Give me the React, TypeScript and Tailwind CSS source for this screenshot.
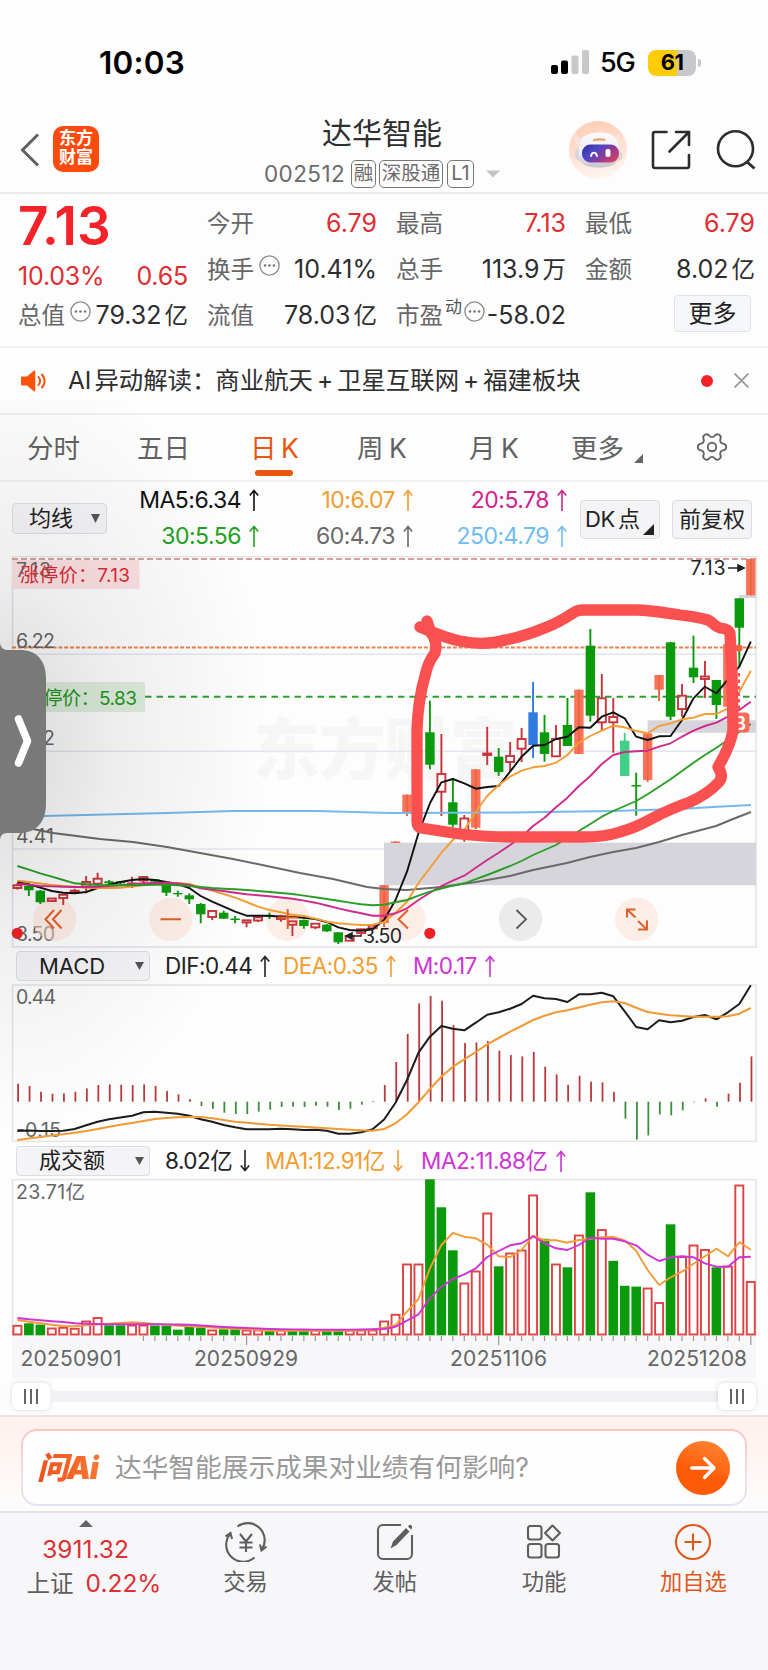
import type { ReactNode } from 'react';
import { Settings } from 'lucide-react';

type Candle = [kind: string, high: number, top: number, bottom: number, low: number];

const STEP = 11.459;
const xAt = (i: number) => 17.4 + i * STEP;

const COLORS: Record<string, string> = {
  r: '#c9343a',
  g: '#0b9a0b',
  o: '#f87459',
  b: '#2f7be0',
  m: '#42d089',
};

// kind: r = hollow red, g = green, o = limit up, b = blue, m = mint
const candles: (Candle | null)[] = [
  ['r', 883, 885.3, 888, 889.5], ['g', 885, 885.7, 890.3, 896], ['g', 890, 890.7, 902.3, 904],
  ['r', 898, 898.5, 901, 901], ['r', 894, 894.8, 898, 905], ['r', 888.7, 890.7, 892, 893.3],
  ['r', 876, 882, 886.5, 893.3], ['r', 872.7, 878.7, 883.7, 888.3], ['g', 880, 881.3, 883.3, 884.7],
  ['g', 881, 881.3, 883.3, 884.7], ['r', 876.7, 883.5, 885, 888], ['r', 876.5, 877, 880.5, 883.3],
  ['g', 879, 879.3, 881.7, 882], ['g', 885, 885, 892.7, 896], ['g', 890.7, 893, 894.3, 896.7],
  ['g', 893.3, 895.3, 899.3, 904], ['g', 903, 904, 914.3, 923.3], ['r', 910.5, 911, 917, 920],
  ['g', 910.7, 912.7, 918.7, 919], ['g', 916, 918.5, 920, 923.3], ['r', 920, 920.3, 922.5, 927.3],
  ['r', 917, 917.3, 920.5, 922], ['g', 912.7, 915.3, 917, 919], ['r', 915, 916.3, 919, 921.7],
  ['r', 921, 921.3, 924.7, 936], ['g', 919.5, 920, 926, 928.7], ['r', 923, 923.7, 927.3, 929.3],
  ['g', 924, 924.7, 931.3, 932], ['g', 932, 932.3, 942.3, 944], ['r', 935.5, 936, 940.7, 941],
  ['r', 928.5, 929.3, 933, 936.7], ['r', 925, 925.7, 928.3, 929], ['o', 885, 885, 923, 927],
  ['o', 841.5, 841.5, 843, 843], ['o', 794.7, 794.7, 812.3, 816], null,
  ['g', 700.7, 732.3, 764.7, 769.3], ['r', 734, 774, 791.7, 816], ['g', 778, 802.3, 824.7, 827],
  ['r', 815, 818.5, 831, 841.7], ['o', 769.3, 769.3, 827.7, 829], ['r', 726.7, 753.5, 755, 765],
  ['g', 748, 756.7, 772, 776], ['r', 742, 756, 762, 772], ['r', 728, 739, 748.7, 762],
  ['b', 682, 712.3, 745, 758], ['g', 715, 732.3, 754, 761.7], ['r', 725, 739, 756.3, 757],
  ['g', 698, 725, 746, 746], ['o', 689.7, 689.7, 754, 754], ['g', 629, 645.7, 715.7, 721.7],
  ['r', 674, 698.3, 722.3, 731], ['r', 698, 717, 722.3, 752.7], ['m', 733, 740.7, 776, 776],
  ['g', 772.7, 785, 786.5, 815.7], ['o', 733.3, 733.3, 780, 782], ['o', 675, 675, 689.7, 701],
  ['g', 642, 642.3, 716.7, 720], ['r', 684, 695.7, 709, 716.7], ['g', 635.7, 667.7, 677.3, 683],
  ['r', 661, 676.5, 679, 698], ['g', 680, 680, 705, 719], ['o', 644, 644, 706.7, 706.7],
  ['g', 598.3, 598.3, 627.7, 666.7], ['o', 559, 559, 595.3, 595.3],
];

const ma5 = [
  882, 884.3, 887.7, 891, 892.7, 893.3, 892, 888, 884.7, 882, 880, 879, 880, 882, 884, 888, 896, 901.7, 906.7, 911.7,
  915.7, 915.7, 915.7, 916.7, 916.7, 917.7, 919, 922, 927.3, 930, 930.7, 929.3, 920, 900, 871.7, 833, 803.3, 782.3,
  779, 783.3, 788.7, 787, 786, 771.7, 756.7, 745.7, 745, 739, 736.7, 727.3, 727.7, 716.7, 712.3, 718.3, 736.7, 740,
  736.3, 736, 720, 698.3, 686.7, 693.3, 679.3, 666.7, 641.7,
];

const ma10 = [
  880.7, 882, 883.5, 885, 886, 886.7, 887.7, 888, 888, 887.7, 886.5, 885.3, 884, 882.7, 883, 884, 887.3, 890.5, 894,
  897.7, 902, 906.7, 910, 912.3, 914.7, 916, 918.7, 921.7, 923.3, 924.3, 925, 924.7, 922, 912.7, 901.7, 883, 868,
  852.7, 840, 830, 811.7, 796, 785, 776.7, 770.7, 767.3, 766, 762.7, 755, 742.7, 736, 730.7, 725.7, 727.3, 731, 733.3,
  726, 723.3, 719.3, 717.7, 714, 714, 708.3, 691.7, 670.7,
];

const ma20 = [
  883.7, 884.8, 886, 886.4, 886.7, 887, 887, 886.7, 886, 885.3, 884.3, 883.3, 883, 882.7, 883.5, 885, 888.3, 889.7,
  891, 892.7, 894.3, 895.3, 896.3, 897.5, 898.7, 900.6, 902.7, 905.5, 908.3, 911, 913.3, 915.7, 915.7, 913.3, 908.3,
  900, 892.7, 886, 880.7, 875.7, 867.7, 860, 852.7, 845, 836.7, 826, 817.7, 807.3, 797.7, 786, 776, 764, 755, 752,
  751.3, 750.7, 746.7, 743.3, 736.7, 730.7, 726, 722.7, 716.7, 710, 701.7,
];

const ma30 = [
  866, 869.7, 873.3, 876.6, 880, 883.3, 884.2, 885, 885.2, 885.3, 885.3, 885, 884.9, 884.7, 885.3, 886, 887, 888,
  888.7, 889.3, 890, 891, 892, 893, 894, 895.6, 897.3, 899, 900.7, 902.6, 904.3, 905.3, 904.7, 902.3, 900, 895.7,
  891.7, 888.5, 885.7, 883.3, 879.2, 875, 870.5, 866, 861, 855, 850, 845, 838, 831, 824, 816.7, 811, 806, 801, 794.3,
  786.7, 779.3, 771, 762.7, 755, 747.7, 740, 732, 724,
];

const ma60 =
  '17,826 33,829 53,833 100,839 133,842 167,847 200,853 233,859 267,866 300,873 333,879 367,887 384,889 407,890 441,887 476,882 510,876 533,870 567,863 590,857 613,852 636,848 659,842 682,835 716,826 733,819 751,812';
const ma250 = '17,817 43,816 167,813 233,811 317,811 390,813 513,812.5 613,811 680,809 713,807 751,805';

const macdBars = [
  18, 15.7, 10, 8, 8.3, 10, 13.3, 16.7, 17.3, 17, 16.7, 17.3, 15.7, 10.7, 7.3, 2.5, -4.3, -7, -11, -12.3, -12.3, -10,
  -8, -5.3, -5, -5.3, -4, -5, -8.3, -7, -3, 0.7, 16.7, 39.7, 67.7, 98.3, 105.7, 101, 76.7, 58.7, 59.3, 60.7, 51, 46.7,
  45.3, 49.7, 35, 27.3, 16.7, 26, 20, 19.3, 10, -17, -38, -33.7, -12.7, -13.7, -8.7, -0.6, 3.3, -5, 8, 19, 45.3,
];

const dif = [
  1131, 1130.5, 1131, 1131, 1130.7, 1129, 1125.3, 1121.7, 1119.3, 1117.5, 1115.7, 1112.3, 1111.7, 1112.7, 1113.7,
  1115.7, 1119.3, 1121.7, 1125, 1127.3, 1129.3, 1129.3, 1129.3, 1128.7, 1129.3, 1130, 1129.7, 1130.7, 1133.7, 1133.7,
  1132.3, 1129.3, 1119.5, 1102.7, 1080, 1052.7, 1036.7, 1026, 1028.7, 1030.3, 1022.7, 1014.7, 1012.3, 1008.7, 1004,
  995.7, 998.3, 999, 1002, 994.3, 994.3, 992.7, 996.3, 1011.3, 1027, 1029.3, 1020.3, 1022.3, 1020.7, 1017, 1015,
  1019.3, 1012.3, 1004, 985.3,
];

const dea = [
  1140, 1138.4, 1137, 1135.6, 1134.3, 1132.7, 1131, 1129, 1126.7, 1124.8, 1123, 1121, 1119, 1118, 1117.3, 1117, 1117,
  1118.3, 1120, 1121.7, 1122.8, 1123.8, 1124.7, 1125.5, 1126.2, 1126.7, 1127.5, 1128.3, 1129, 1129.7, 1130.3, 1130.7,
  1129, 1123.3, 1114.3, 1102.3, 1089, 1076.7, 1066.7, 1059.3, 1052, 1044.3, 1038, 1031.7, 1026, 1020, 1015.7, 1012.3,
  1010.3, 1007.5, 1004.7, 1002.3, 1001.3, 1003, 1007.7, 1012, 1013.7, 1015.3, 1016, 1016.7, 1016.7, 1016.7, 1016.3,
  1013.7, 1008,
];

// negative = down day
const volumes = [
  9.7, -12, -10.7, 7, 7.7, 6.7, 14, 17.5, -10, -10, 10, 10, -9.7, -9.7, -5.7, -8.3, -8, 5, -6, -6, 5, 5, -5, 5, -5, -5,
  5, -5, -5.3, 5, 5, 5, 14, 20.7, 71, 71, -156, -128, -85, 52, 64, 122, -69, 82, 85, 140, -96.5, 71, -68, 100, -143,
  105.5, -74.5, -49.5, -48.7, 47, 32.5, -111, 78.5, 90, 85.5, -68, 69, 150, 53.5,
];

const volMa1 = [
  1320, 1321.7, 1323.3, 1324.8, 1326, 1326.2, 1325.3, 1324.5, 1323.7, 1323, 1322.3, 1323, 1324, 1324.7, 1325.7, 1326.2,
  1326.7, 1327.5, 1328.3, 1328.8, 1329.3, 1330, 1330.7, 1330.7, 1330.7, 1330.7, 1330.7, 1330.7, 1330.7, 1330.5, 1330.3,
  1329.7, 1327.7, 1325, 1311.7, 1299, 1268.3, 1245, 1233, 1236.7, 1238.3, 1244.7, 1256.3, 1257, 1250, 1235.7, 1240.3,
  1240.3, 1242.7, 1240, 1238.7, 1237.3, 1237, 1240.3, 1251, 1270, 1285, 1277.3, 1271.7, 1263.7, 1256.3, 1248.7, 1256.3,
  1242.3, 1249.7,
];

const volMa2 = [
  1318, 1319.3, 1320.3, 1321.2, 1322, 1323.3, 1323.7, 1324, 1324.3, 1324.3, 1324.3, 1324.3, 1324.3, 1324.4, 1324.5,
  1324.7, 1325.5, 1326.3, 1327, 1327.5, 1328, 1328.5, 1329, 1329.3, 1329.4, 1329.5, 1329.6, 1329.7, 1329.7, 1329.6,
  1329.5, 1329.3, 1329, 1326.7, 1320.7, 1314.3, 1298.3, 1286.7, 1279, 1274.3, 1268.3, 1257, 1251, 1245.3, 1243.3,
  1236.3, 1243.3, 1248.3, 1250, 1245, 1237.7, 1238.7, 1238.7, 1241.3, 1245.3, 1254.7, 1261, 1257.3, 1256.3, 1257.3,
  1263.3, 1266.7, 1266.7, 1257.3, 1256.7,
];

const toPoints = (values: number[]) => values.map((y, i) => `${xAt(i).toFixed(1)},${y}`).join(' ');

function Series({ points, color, width = 1.9 }: { points: string; color: string; width?: number }) {
  return <polyline points={points} fill="none" stroke={color} strokeWidth={width} strokeLinejoin="round" />;
}

function AxisText({ x, y, w, children }: { x: number; y: number; w: number; children: string }) {
  return (
    <text x={x} y={y} textLength={w} fontSize="19.5" fill="#666">
      {children}
    </text>
  );
}

function Arrow({ down = false }: { down?: boolean }) {
  return (
    <svg
      width="10"
      height="22"
      viewBox="0 0 10 22"
      className={`ml-[8px] shrink-0 ${down ? 'rotate-180' : ''}`}
      fill="none"
      stroke="currentColor"
      strokeWidth="1.6"
    >
      <path d="M5 22V1.5M0.8 6.5L5 1.5L9.2 6.5" />
    </svg>
  );
}

function Hint() {
  return (
    <svg width="21" height="21" viewBox="0 0 21 21" fill="none" stroke="#8e8e8e" strokeWidth="1.4">
      <circle cx="10.5" cy="10.5" r="9.6" />
      <g fill="#777" stroke="none">
        <circle cx="6" cy="10.5" r="1.3" />
        <circle cx="10.5" cy="10.5" r="1.3" />
        <circle cx="15" cy="10.5" r="1.3" />
      </g>
    </svg>
  );
}

function StatusBar() {
  return (
    <div className="h-[110px] flex items-start pt-[44px] pl-[99px] pr-[67px]">
      <span className="text-[31.5px] leading-[37px] font-semibold text-black tracking-[0.2px]">10:03</span>
      <div className="ml-auto flex items-center h-[37px]">
        <svg width="38" height="25" viewBox="0 0 38 25">
          <rect x="0" y="15" width="7" height="9" rx="2" fill="#000" />
          <rect x="10" y="10.5" width="7" height="13.5" rx="2" fill="#000" />
          <rect x="20.5" y="5.5" width="7" height="18.5" rx="2" fill="#c8c8ca" />
          <rect x="31" y="0" width="7" height="24" rx="2" fill="#c8c8ca" />
        </svg>
        <span className="ml-[11px] w-[48px] text-[27px] leading-[37px] font-medium text-black tracking-[-1.2px]">5G</span>
        <div className="w-[48px] h-[26px] rounded-[8px] bg-[linear-gradient(90deg,#ffcc0a_60%,#c8c8ca_60%)] flex items-center justify-center text-[22px] font-bold text-black tracking-[-0.6px]">
          61
        </div>
        <div className="ml-[2px] w-[3px] h-[8px] rounded-r-full bg-[#c8c8ca]" />
      </div>
    </div>
  );
}

function Robot() {
  return (
    <svg width="58" height="58" viewBox="0 0 58 58">
      <defs>
        <linearGradient id="halo" x1="0.3" x2="0.5" y1="0" y2="1">
          <stop offset="0" stopColor="#ffcdb5" />
          <stop offset="0.5" stopColor="#ffdfd0" />
          <stop offset="1" stopColor="#fff6f2" />
        </linearGradient>
        <linearGradient id="visor" x1="0" x2="1" y1="0.2" y2="0.8">
          <stop offset="0" stopColor="#3a2fa5" />
          <stop offset="0.3" stopColor="#4a48c4" />
          <stop offset="0.6" stopColor="#8a3a9c" />
          <stop offset="1" stopColor="#e0405a" />
        </linearGradient>
        <linearGradient id="head" x1="0" x2="0" y1="0" y2="1">
          <stop offset="0" stopColor="#fbfbfd" />
          <stop offset="0.6" stopColor="#ececf1" />
          <stop offset="1" stopColor="#c4c4cc" />
        </linearGradient>
      </defs>
      <circle cx="29" cy="29" r="29" fill="url(#halo)" />
      <path d="M6 11c1 5 4 6 7 7l-4 7c-3-4-5-9-3-14zM49 12c-1 4-3 6-5 7l5 6c2-4 2-9 0-13z" fill="#f5e6e2" />
      <path d="M7 29c-1.500 3-1.500 8 1 10l6 2V26zM51 29c2.500 3 3 7 1 10l-7 3V26z" fill="#d9d5dc" />
      <path d="M13 18C16 11 41 8 47 18C51 26 52 36 47 42C42 48 18 48 13 42C8 36 9 25 13 18z" fill="url(#head)" />
      <rect x="13" y="23.500" width="37" height="18" rx="8.500" fill="url(#visor)" />
      <path d="M24 18.500Q30 16.500 36 18L36.500 20Q30 19 24 20.500z" fill="#e8a268" />
      <path d="M22 35c1-4.500 5-4.500 6 0" fill="none" stroke="#fff" strokeWidth="1.900" strokeLinecap="round" />
      <rect x="36.500" y="28" width="5" height="8" rx="2" fill="#fff" />
    </svg>
  );
}

function NavBar() {
  return (
    <div className="h-[84px] border-b-2 border-[#ebebec] flex items-start">
      <svg width="20" height="34" viewBox="0 0 20 34" className="ml-[20px] mt-[23px]" fill="none" stroke="#606060" strokeWidth="3">
        <path d="M18 1.5L2.5 17L18 32.5" />
      </svg>
      <div className="ml-[13px] mt-[16px] w-[46px] h-[46px] rounded-[10px] bg-[#fe4a0c] text-white text-[17px] leading-[19px] font-bold text-center pt-[3px]">
        东方
        <br />
        财富
      </div>
      <div className="ml-[165px] w-[236px] flex flex-col items-center">
        <h1 className="text-[30px] leading-[40px] mt-[3px] text-[#2f2f2f]">达华智能</h1>
        <div className="mt-[7px] flex items-center text-[#6b6b6b] text-[22.5px] leading-[28px]">
          <span className="w-[87px] tracking-[0.4px]">002512</span>
          <span className="w-[25px] h-[28px] border-[1.5px] border-[#777] rounded-[5px] text-[19.5px] leading-[25px] flex justify-center">融</span>
          <span className="ml-[3px] w-[64px] h-[28px] border-[1.5px] border-[#777] rounded-[5px] text-[19.5px] leading-[25px] flex justify-center">深股通</span>
          <span className="ml-[4px] w-[27px] h-[28px] border-[1.5px] border-[#777] rounded-[5px] text-[20px] leading-[25px] flex justify-center">L1</span>
          <svg width="14" height="8" viewBox="0 0 14 8" className="ml-[12px]">
            <path d="M0 0.5h14L7 7.5z" fill="#c4c4c4" />
          </svg>
        </div>
      </div>
      <div className="ml-auto mr-[11px] mt-[11px] flex items-start">
        <Robot />
        <svg width="40" height="40" viewBox="0 0 40 40" className="ml-[24px] mt-[9px]" fill="none" stroke="#2c2c2c" strokeWidth="2.6" strokeLinecap="round">
          <path d="M15.500 2H4a2 2 0 0 0-2 2v32a2 2 0 0 0 2 2h32a2 2 0 0 0 2-2V25M18.500 21.500L37.500 2.500M25 2h13v13" />
        </svg>
        <svg width="41" height="41" viewBox="0 0 41 41" className="ml-[25px] mt-[9px]" fill="none" stroke="#2c2c2c" strokeWidth="2.6">
          <circle cx="19.5" cy="18.800" r="17.500" />
          <path d="M30.500 31.500L38.500 38.500" strokeWidth="2.800" />
        </svg>
      </div>
    </div>
  );
}

function Stat({ label, value, red = false, extra }: { label: string; value: string; red?: boolean; extra?: ReactNode }) {
  const unit = /[万亿]$/.test(value) ? value.slice(-1) : '';
  return (
    <div className="h-[46px] flex items-center text-[23.5px]">
      <span className="text-[#666]">{label}</span>
      {extra}
      <span className={`ml-auto whitespace-nowrap text-[25px] ${red ? 'text-[#e02d31]' : 'text-[#2d2d2d]'}`}>
        {unit ? value.slice(0, -1) : value}
        {unit && <span className="ml-[3px] text-[23.5px]">{unit}</span>}
      </span>
    </div>
  );
}

function Quote() {
  return (
    <div className="h-[154px] border-b-2 border-[#f3f3f4] flex gap-[19px] pl-[18px] pt-[7px]">
      <div className="w-[170px] flex flex-col">
        <div className="h-[51px] text-[53px] leading-[50px] font-semibold tracking-[0.2px] text-[#f52329]">7.13</div>
        <div className="h-[41px] pt-[9px] flex items-center justify-between text-[25px] tracking-[-0.2px] text-[#e02d31]">
          <span>10.03%</span>
          <span>0.65</span>
        </div>
        <Stat label="总值" value="79.32亿" extra={<span className="ml-[5px] -mt-[9px]"><Hint /></span>} />
      </div>
      <div className="w-[170px]">
        <Stat label="今开" value="6.79" red />
        <Stat label="换手" value="10.41%" extra={<span className="ml-[5px] -mt-[9px]"><Hint /></span>} />
        <Stat label="流值" value="78.03亿" />
      </div>
      <div className="w-[170px]">
        <Stat label="最高" value="7.13" red />
        <Stat label="总手" value="113.9万" />
        <Stat
          label="市盈"
          value="-58.02"
          extra={
            <>
              <span className="ml-[2px] -mt-[16px] text-[17px] text-[#555]">动</span>
              <span className="ml-[2px] -mt-[9px]"><Hint /></span>
            </>
          }
        />
      </div>
      <div className="w-[170px]">
        <Stat label="最低" value="6.79" red />
        <Stat label="金额" value="8.02亿" />
        <button className="mt-[2px] ml-[89px] w-[77px] h-[37px] flex items-center justify-center rounded-[4px] border-[1.5px] border-[#e2e3e8] bg-[#f6f7fa] text-[24px] leading-[33px] text-[#222]">
          更多
        </button>
      </div>
    </div>
  );
}

function Notice() {
  return (
    <div className="h-[67px] border-b-2 border-[#f0f0f2] flex items-center pl-[20px] pr-[19px]">
      <svg width="27" height="22" viewBox="0 0 27 22">
        <path d="M1 7.5a1 1 0 0 1 1-1h5L13.5 1c1-.8 1.800-.3 1.800.8v18.400c0 1.100-.8 1.600-1.800.8L7 15.500H2a1 1 0 0 1-1-1z" fill="#fb520c" />
        <path d="M18.500 7c2 2.500 2 5.500 0 8M22 4.500c3.300 4 3.300 9 0 13" fill="none" stroke="#fb520c" strokeWidth="2" strokeLinecap="round" />
      </svg>
      <span className="ml-[21px] text-[24.4px] text-[#2e2e2e] whitespace-nowrap">
        AI<span className="ml-[3px] -mr-[1px]">异动解读：</span>
        <span>商业航天</span>
        <span className="px-[4px]">+</span>
        <span>卫星互联网</span>
        <span className="px-[4px]">+</span>
        <span>福建板块</span>
      </span>
      <span className="ml-auto w-[12px] h-[12px] rounded-full bg-[#f32227]" />
      <svg width="15" height="15" viewBox="0 0 15 15" className="ml-[21px]" stroke="#999" strokeWidth="1.800">
        <path d="M0.500 0.500L14.500 14.500M14.500 0.500L0.500 14.500" />
      </svg>
    </div>
  );
}

function Tabs() {
  return (
    <div className="h-[67px] border-b-2 border-[#f0f0f2] flex text-[26.5px] leading-[66px] text-[#626262]">
      <span className="ml-[27px] w-[110px]">分时</span>
      <span className="w-[113px]">五日</span>
      <span className="w-[107px] text-[#e8560f] flex flex-col">
        <span className="h-[55px] [word-spacing:-3px]">日 K</span>
        <span className="ml-[5px] w-[38px] h-[6px] rounded-[3px] bg-[#e8560f]" />
      </span>
      <span className="w-[112px] [word-spacing:-2px]">周 K</span>
      <span className="w-[102px] [word-spacing:-2px]">月 K</span>
      <span className="w-[54px]">更多</span>
      <svg width="9" height="9" viewBox="0 0 9 9" className="ml-[9px] mt-[39px]">
        <path d="M9 0v9H0z" fill="#666" />
      </svg>
      <Settings size={34} strokeWidth={1.300} className="ml-[52px] mt-[15px] rotate-90" />
    </div>
  );
}

function Ma({ text, className }: { text: string; className: string }) {
  return (
    <span className={`flex items-center justify-end ${className}`}>
      {text}
      <Arrow />
    </span>
  );
}

function MaRow() {
  return (
    <div className="h-[74px] flex items-start pl-[12px] pr-[16px]">
      <button className="mt-[21px] w-[95px] h-[31px] shrink-0 flex items-center rounded-[4px] border-[1.500px] border-[#dcdde2] bg-[#f4f4f7] pl-[16px] text-[22px] text-[#222]">
        均线
        <svg width="9" height="9" viewBox="0 0 9 9" className="ml-[18px]">
          <path d="M0 0h9L4.500 9z" fill="#555" />
        </svg>
      </button>
      <div className="w-[461px] grid grid-cols-[152px_154px_154px] auto-rows-[36px] text-[23px] tracking-[-0.500px]">
        <Ma text="MA5:6.34" className="text-[#111]" />
        <Ma text="10:6.07" className="text-[#f29d2e]" />
        <Ma text="20:5.78" className="text-[#cf2389]" />
        <Ma text="30:5.56" className="text-[#22a01e]" />
        <Ma text="60:4.73" className="text-[#6a6a6a]" />
        <Ma text="250:4.79" className="text-[#70bdf3]" />
      </div>
      <button className="ml-[13px] mt-[18px] w-[80px] h-[39px] shrink-0 flex items-center rounded-[4px] border-[1.500px] border-[#dcdde2] bg-[#f4f4f7] pl-[4px] text-[22px] tracking-[-0.300px] [word-spacing:-3px] text-[#222]">
        DK 点
        <svg width="11" height="11" viewBox="0 0 11 11" className="ml-[3px] mt-[20px] shrink-0">
          <path d="M11 0v11H0z" fill="#222" />
        </svg>
      </button>
      <button className="ml-[12px] mt-[18px] w-[80px] h-[39px] shrink-0 rounded-[4px] border-[1.500px] border-[#dcdde2] bg-[#f4f4f7] text-[22px] text-[#222]">
        前复权
      </button>
    </div>
  );
}

function CandleMark({ candle, i }: { candle: Candle; i: number }) {
  const [kind, high, top, bottom, low] = candle;
  const x = xAt(i);
  const color = COLORS[kind];
  if (kind === 'r') {
    return (
      <g stroke={color} strokeWidth="1.900" fill="none">
        <path d={`M${x} ${high}V${top}M${x} ${bottom}V${low}`} />
        <rect x={x - 4} y={top} width="8" height={bottom - top} />
      </g>
    );
  }
  return (
    <g>
      <path d={`M${x} ${high}V${low}`} stroke={kind === 'o' ? '#e9603f' : color} strokeWidth="1.900" />
      <rect x={x - 4.700} y={top} width="9.400" height={bottom - top} fill={color} />
      {kind === 'o' && <path d={`M${x} ${top}V${bottom}`} stroke="#ee6343" strokeWidth="1.800" />}
    </g>
  );
}

function KChart() {
  return (
    <svg width="768" height="392" viewBox="0 556 768 392" className="block" fontFamily="Inter, 'Noto Sans CJK SC', sans-serif">
      <text x="253" y="774" fontSize="67" fontWeight="900" fill="#000" fillOpacity="0.028" textLength="264">东方财富</text>
      <path d="M12 654.300H756M12 751.300H756M12 849H756" stroke="#e3e6ee" strokeWidth="1.500" />
      <rect x="12.500" y="556.500" width="743.500" height="390.500" fill="none" stroke="#dfe2ea" strokeWidth="1.500" />
      <rect x="384" y="842.700" width="372" height="42.500" fill="#d5d5db" />
      <rect x="647.700" y="720.300" width="108.300" height="12.500" fill="#d5d5db" />
      <rect x="739" y="595" width="17" height="3" fill="#d5d5db" />

      <rect x="12" y="560" width="127.500" height="29" rx="2" fill="#fce0e3" />
      <path d="M12 559H756" stroke="#c98277" strokeWidth="1.500" strokeDasharray="6 3" />
      <path d="M12 647.500H756" stroke="#e8834f" strokeWidth="1.800" strokeDasharray="4 1.800" />
      <path d="M145 696.700H756" stroke="#2f9f2f" strokeWidth="2" strokeDasharray="6.500 5" />
      <rect x="13" y="682" width="132" height="30" rx="2" fill="#deeede" />
      <AxisText x={16} y={577} w={35}>7.13</AxisText>
      <text x="20" y="582" fontSize="19" fill="#dd2c31" textLength="110">涨停价：7.13</text>
      <text x="25" y="704.500" fontSize="19" fill="#1f961c" textLength="112">跌停价：5.83</text>
      <AxisText x={16} y={648} w={39}>6.22</AxisText>
      <AxisText x={16} y={745} w={39}>5.32</AxisText>
      <AxisText x={16} y={843} w={38}>4.41</AxisText>
      <AxisText x={16} y={940.500} w={39}>3.50</AxisText>

      {/* chart controls */}
      {[54.700, 170.700, 287.700, 403.700, 636.700].map((cx) => (
        <circle key={cx} cx={cx} cy="919.300" r="21.700" fill="#fdddd0" fillOpacity="0.500" />
      ))}
      <circle cx="520.500" cy="919.300" r="21.700" fill="#ebebeb" />

      {candles.map((c, i) => c && <CandleMark key={i} candle={c} i={i} />)}

      <Series points={ma60} color="#6a6a6a" />
      <Series points={ma250} color="#74b9ea" />
      <Series points={toPoints(ma5)} color="#111" />
      <Series points={toPoints(ma10)} color="#f59d33" />
      <Series points={toPoints(ma20)} color="#d02a8c" />
      <Series points={toPoints(ma30)} color="#2a9f27" />

      <g fill="none" stroke="#e0602a" strokeWidth="2">
        <path d="M54 910L45.500 919.300L54 928.500M61.500 910L53 919.300L61.500 928.500" />
        <path d="M160.500 919.300H181M277.500 917.500H298M287.700 909V929" />
        <path d="M408 910L398.500 919.300L408 928.500" />
        <path d="M627 917.500V909.500H635.500M627 909.500L635.500 917.500M647 920.500V929.500H638M647 929.500L638 921" />
      </g>
      <path d="M516.500 910L526 919.300L516.500 928.500" fill="none" stroke="#555" strokeWidth="1.800" />
      <circle cx="17.300" cy="933.300" r="5.600" fill="#ee2226" />
      <circle cx="429.800" cy="933.300" r="5.600" fill="#ee2226" />

      <g fontSize="19.500" fill="#222" stroke="none">
        <text x="363" y="943" textLength="39">3.50</text>
        <text x="690.500" y="575" textLength="35">7.13</text>
      </g>
      <g stroke="#222" strokeWidth="1.600" fill="#222">
        <path d="M346 936H361M346 936l6-3v6z" />
        <path d="M728 568H744M744 568l-6-3v6z" />
      </g>

      <path d="M739 673V712" stroke="#f0574a" strokeWidth="2" strokeDasharray="3.500 3" />
      <circle cx="739" cy="648" r="3.600" fill="#f2603f" />
      <rect x="731" y="712.500" width="18.500" height="20" rx="4" fill="#f7695a" />
      <text x="733.500" y="730" fontSize="19" fontWeight="600" fill="#fff">B</text>

      {/* hand drawn marker */}
      <path
        d="M420 627C432 632 445 638 460 641C475 644 492 644 505 640C522 637 535 632 547 627C560 622 570 615 574 612.500Q577 610 584 610H637C650 610 666 613 680 615Q698 617 708 620C714 623 714 626 720 628Q729 629 730 633L732 673L733 730Q731 745 718 767Q724 776 719 782Q708 794 690 802Q670 809 653 818Q635 828 620 832Q605 837 583 837H513Q490 837 460 834L421 828Q417 827 417 821V730Q418 700 425 676Q428 662 435 653Q438 642 431 633L427 621"
        fill="none"
        stroke="#fb5050"
        strokeWidth="11.300"
        strokeLinecap="round"
        strokeLinejoin="round"
      />
    </svg>
  );
}

function PanelHead({ label, className, children }: { label: string; className: string; children: ReactNode }) {
  return (
    <div className={`flex items-center pl-[16px] text-[22.500px] ${className}`}>
      <button className="w-[134px] h-[30px] shrink-0 mr-[15px] flex items-center justify-between rounded-[4px] border-[1.500px] border-[#dcdde2] bg-[#f4f4f7] pl-[22px] pr-[5px] text-[22px] tracking-normal text-[#222]">
        {label}
        <svg width="9" height="8" viewBox="0 0 9 8">
          <path d="M0 0h9L4.500 8z" fill="#555" />
        </svg>
      </button>
      {children}
    </div>
  );
}

function MacdPanel() {
  return (
    <>
      <PanelHead label="MACD" className="h-[36px] tracking-[-0.500px]">
        <span className="w-[118px] flex items-center text-[#222]">DIF:0.44<Arrow /></span>
        <span className="w-[130px] flex items-center text-[#f29d2e]">DEA:0.35<Arrow /></span>
        <span className="flex items-center text-[#cf33d3]">M:0.17<Arrow /></span>
      </PanelHead>
      <svg width="768" height="158" viewBox="0 984 768 158" className="block" fontFamily="Inter, sans-serif">
        <rect x="12.500" y="985" width="743.500" height="156.500" fill="none" stroke="#e2e3e8" strokeWidth="1.500" />
        <AxisText x={16} y={1004} w={40}>0.44</AxisText>
        <AxisText x={16} y={1137} w={45}>-0.15</AxisText>
        {macdBars.map((v, i) => (
          <path key={i} d={`M${xAt(i) + 0.700} 1101.700v${-v}`} stroke={v > 0 ? '#b8393b' : '#3c8e3a'} strokeWidth="1.800" />
        ))}
        <Series points={toPoints(dif)} color="#1c1c1c" width={2} />
        <Series points={toPoints(dea)} color="#ef9a33" width={2} />
      </svg>
    </>
  );
}

function VolumePanel() {
  return (
    <>
      <PanelHead label="成交额" className="h-[37px]">
        <span className="w-[100px] flex items-center tracking-[-0.500px] text-[#222]">8.02亿<Arrow down /></span>
        <span className="w-[156px] flex items-center tracking-[-0.600px] text-[#f29d2e]">MA1:12.91亿<Arrow down /></span>
        <span className="flex items-center tracking-[-0.400px] text-[#cf33d3]">MA2:11.88亿<Arrow /></span>
      </PanelHead>
      <svg width="768" height="199" viewBox="0 1179 768 199" className="block" fontFamily="Inter, 'Noto Sans CJK SC', sans-serif">
        <rect x="12" y="1335.500" width="744" height="42.500" fill="#f7f7fa" />
        <path d="M12.500 1336V1179.500H756V1336" fill="none" stroke="#e2e3e8" strokeWidth="1.500" />
        <AxisText x={16} y={1198.500} w={69}>23.71亿</AxisText>
        {volumes.map((v, i) =>
          v > 0 ? (
            <rect key={i} x={xAt(i) - 4} y={1335 - v + 0.500} width="8" height={v - 1} fill="#fff" stroke="#de4242" strokeWidth="1.900" />
          ) : (
            <rect key={i} x={xAt(i) - 4.800} y={1335.300 + v} width="9.600" height={-v} fill="#0b9a0b" />
          )
        )}
        {volumes.map((_, i) =>
          i > 10 ? (
            <path key={i} d={`M${xAt(i)} 1336v${[20, 42, 64].includes(i) ? 9 : 5}`} stroke="#999" strokeWidth="1.200" />
          ) : null
        )}
        <Series points={toPoints(volMa1)} color="#f29d38" />
        <Series points={toPoints(volMa2)} color="#cf33d3" />
        <g fontSize="21" fill="#666">
          <text x="20.500" y="1365.500" textLength="101">20250901</text>
          <text x="194" y="1365.500" textLength="104">20250929</text>
          <text x="450" y="1365.500" textLength="97">20251106</text>
          <text x="647" y="1365.500" textLength="100">20251208</text>
        </g>
      </svg>
    </>
  );
}

function Grip() {
  return (
    <div className="w-[38px] h-[27px] rounded-[6px] bg-white shadow-[0_0_5px_rgba(0,0,0,0.15)] flex items-center justify-center gap-[4px]">
      <span className="w-[2px] h-[15px] bg-[#666]" />
      <span className="w-[2px] h-[15px] bg-[#666]" />
      <span className="w-[2px] h-[15px] bg-[#666]" />
    </div>
  );
}

function RangeSlider() {
  return (
    <div className="h-[37px] px-[12px] flex items-center">
      <Grip />
      <div className="flex-1 h-[11px] bg-[#f1f1f4]" />
      <Grip />
    </div>
  );
}

function AskBar() {
  return (
    <div className="h-[96px] border-t-2 border-[#e9e3e4] bg-[linear-gradient(180deg,#fff0ee,#fff7f5_60%,#fdfdfe)] px-[21px] pt-[12px]">
      <div className="h-[77px] rounded-[16px] p-[2px] bg-[linear-gradient(180deg,#fbc4be,#f3dbe2_50%,#dfe3f4)]">
        <div className="h-full rounded-[14px] bg-[#fefefe] flex items-center pl-[14px] pr-[15px]">
          <span className="w-[78px] text-[31px] leading-[44px] font-black italic tracking-[-1.500px] text-transparent bg-clip-text bg-[linear-gradient(90deg,#f0501a,#ff8038)]">
            问Ai
          </span>
          <span className="text-[26.700px] text-[#999] whitespace-nowrap">达华智能展示成果对业绩有何影响?</span>
          <span className="ml-auto w-[54px] h-[54px] rounded-full bg-[linear-gradient(200deg,#ff8a3c,#ff5a05_60%)] flex items-center justify-center">
            <svg width="28" height="24" viewBox="0 0 28 24" fill="none" stroke="#fff" strokeWidth="3.300" strokeLinecap="round" strokeLinejoin="round">
              <path d="M2.500 12H25M15.500 2.500L25 12L15.500 21.500" />
            </svg>
          </span>
        </div>
      </div>
    </div>
  );
}

function NavItem({ label, className = 'text-[#5e5e5e]', children }: { label: string; className?: string; children: ReactNode }) {
  return (
    <div className={`flex-1 flex flex-col items-center pt-[9px] text-[22.300px] leading-[30px] ${className}`}>
      <svg width="42" height="40" viewBox="0 0 42 40" fill="none" stroke="currentColor" strokeWidth="2.100">
        {children}
      </svg>
      <span className="mt-[5px]">{label}</span>
    </div>
  );
}

function BottomNav() {
  return (
    <div className="h-[159px] bg-[#f7f7fa] border-t-2 border-[#e3e3e6] flex">
      <div className="w-[171px] pt-[7px] flex flex-col items-center">
        <svg width="14" height="7" viewBox="0 0 14 7">
          <path d="M0 7h14L7 0z" fill="#666" />
        </svg>
        <span className="mt-[6px] text-[24.500px] leading-[32px] text-[#de2f33]">3911.32</span>
        <span className="mt-[2px] ml-[17px] text-[23.500px] leading-[32px] text-[#5e5e5e] whitespace-nowrap">
          上证<span className="ml-[12px] text-[24.500px] text-[#de2f33]">0.22%</span>
        </span>
      </div>
      <NavItem label="交易">
        <path d="M12.500 4.500A17 17 0 0 1 36.500 28M29.500 35.500A17 17 0 0 1 5.500 11.500M0.500 14.500L5.500 11L7 17M41.500 24.500L36.500 28.500L35 22.500" />
        <path d="M15 12L21 19.500L27 12M21 19.500V30M14.500 20.500H27.500M14.500 25.500H27.500" />
      </NavItem>
      <NavItem label="发帖">
        <path d="M27 3H9a5 5 0 0 0-5 5v24a5 5 0 0 0 5 5h24a5 5 0 0 0 5-5V13" />
        <path d="M16.500 26.500L19 19.500L32 6L35.500 9.500L22.500 23zM34 4.500L36 2.500Q38.500 3.500 38 6L37 7.500z" fill="currentColor" stroke="none" />
      </NavItem>
      <NavItem label="功能">
        <rect x="5" y="4" width="13.500" height="13.500" rx="2.500" />
        <rect x="5" y="22" width="13.500" height="13.500" rx="2.500" />
        <rect x="22.500" y="22" width="13.500" height="13.500" rx="2.500" />
        <path d="M29.500 3.500L37 11L29.500 18.500L22 11z" strokeLinejoin="round" />
      </NavItem>
      <NavItem label="加自选" className="text-[#e0571c]">
        <circle cx="21" cy="20" r="17" />
        <path d="M12.500 20H29.500M21 11.500V28.500" />
      </NavItem>
    </div>
  );
}

export default function App() {
  return (
    <div className="relative w-[768px] h-[1670px] overflow-hidden bg-[#fdfdfe] font-[Inter,'Noto_Sans_CJK_SC',sans-serif]">
      <StatusBar />
      <NavBar />
      <Quote />
      <Notice />
      <Tabs />
      <MaRow />
      <KChart />
      <MacdPanel />
      <VolumePanel />
      <RangeSlider />
      <AskBar />
      <BottomNav />

      {/* side drawer handle and the shade it casts */}
      <div className="absolute left-0 top-[400px] w-[300px] h-[800px] pointer-events-none bg-[radial-gradient(ellipse_270px_390px_at_0_342px,rgba(0,0,0,0.15),rgba(0,0,0,0.06)_45%,transparent)]" />
      <svg width="46" height="196" viewBox="0 0 46 196" className="absolute left-0 top-[643px]">
        <path d="M0 0Q1 7 7 7H20C36 7 46 17 46 35V161C46 179 36 190 20 190H7Q1 190 0 196z" fill="#797979" />
        <path d="M18.500 76L27.500 98L18.500 120" fill="none" stroke="#fff" strokeWidth="7.500" strokeLinecap="round" strokeLinejoin="round" />
      </svg>
    </div>
  );
}
